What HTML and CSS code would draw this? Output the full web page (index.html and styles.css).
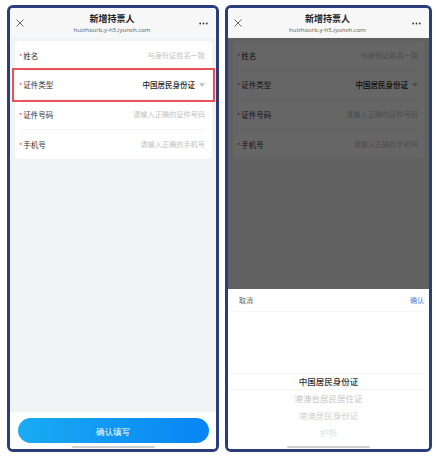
FILE: index.html
```html
<!DOCTYPE html>
<html lang="zh-CN">
<head>
    <meta charset="UTF-8">
    <meta name="viewport" content="width=device-width, initial-scale=1.0">
    <title>新增持票人</title>
    <link rel="stylesheet" href="styles.css">
</head>
<body>
    <div class="screens">
        <!-- Left: the form -->
        <div class="phone phone-left">
            <div class="topbar">
                <span class="close">
                    <svg width="8" height="8" viewBox="0 0 8 8"><path d="M0.5 0.5L7.5 7.5M7.5 0.5L0.5 7.5" stroke="#444" stroke-width="0.8" fill="none"/></svg>
                </span>
                <div class="titles">
                    <div class="title">新增持票人</div>
                    <div class="url">huizhourb.y-h5.iyunxh.com</div>
                </div>
                <span class="more">
                    <svg width="9" height="3" viewBox="0 0 9 3"><circle cx="1.2" cy="1.5" r="0.9" fill="#333"/><circle cx="4.5" cy="1.5" r="0.9" fill="#333"/><circle cx="7.8" cy="1.5" r="0.9" fill="#333"/></svg>
                </span>
            </div>

            <div class="page">
                <div class="card">
                    <div class="row">
                        <span class="label"><i>*</i>姓名</span>
                        <span class="hint">与身份证姓名一致</span>
                    </div>
                    <div class="row row-marked">
                        <span class="label"><i>*</i>证件类型</span>
                        <span class="value">中国居民身份证<span class="caret"></span></span>
                    </div>
                    <div class="row">
                        <span class="label"><i>*</i>证件号码</span>
                        <span class="hint">请输入正确的证件号码</span>
                    </div>
                    <div class="row">
                        <span class="label"><i>*</i>手机号</span>
                        <span class="hint">请输入正确的手机号</span>
                    </div>
                </div>
            </div>

            <div class="footer">
                <button type="button" class="submit">确认填写</button>
                <div class="home-bar"></div>
            </div>
        </div>

        <!-- Right: the picker sheet open -->
        <div class="phone phone-right">
            <div class="topbar">
                <span class="close">
                    <svg width="8" height="8" viewBox="0 0 8 8"><path d="M0.5 0.5L7.5 7.5M7.5 0.5L0.5 7.5" stroke="#444" stroke-width="0.8" fill="none"/></svg>
                </span>
                <div class="titles">
                    <div class="title">新增持票人</div>
                    <div class="url">huizhourb.y-h5.iyunxh.com</div>
                </div>
                <span class="more">
                    <svg width="9" height="3" viewBox="0 0 9 3"><circle cx="1.2" cy="1.5" r="0.9" fill="#333"/><circle cx="4.5" cy="1.5" r="0.9" fill="#333"/><circle cx="7.8" cy="1.5" r="0.9" fill="#333"/></svg>
                </span>
            </div>

            <div class="page">
                <div class="card">
                    <div class="row">
                        <span class="label"><i>*</i>姓名</span>
                        <span class="hint">与身份证姓名一致</span>
                    </div>
                    <div class="row">
                        <span class="label"><i>*</i>证件类型</span>
                        <span class="value">中国居民身份证<span class="caret"></span></span>
                    </div>
                    <div class="row">
                        <span class="label"><i>*</i>证件号码</span>
                        <span class="hint">请输入正确的证件号码</span>
                    </div>
                    <div class="row">
                        <span class="label"><i>*</i>手机号</span>
                        <span class="hint">请输入正确的手机号</span>
                    </div>
                </div>
                <div class="mask"></div>
            </div>

            <div class="sheet">
                <div class="sheet-bar">
                    <span class="cancel">取消</span>
                    <span class="confirm">确认</span>
                </div>
                <ul class="picker">
                    <li class="picked">中国居民身份证</li>
                    <li class="far-1">港澳台居民居住证</li>
                    <li class="far-2">港澳居民身份证</li>
                    <li class="far-3">护照</li>
                </ul>
                <div class="home-bar"></div>
            </div>
        </div>
    </div>
</body>
</html>
```

FILE: styles.css
```css
/* General */
body {
    margin: 0;
    background-color: #ffffff;
    font-family: "Noto Sans CJK SC", "Noto Sans", sans-serif;
    color: #333333;
}

.screens {
    display: flex;
    gap: 6px;
    padding: 5px 0 0 7px;
}

/* Phone frame */
.phone {
    display: flex;
    flex-direction: column;
    box-sizing: border-box;
    height: 447px;
    border: 3px solid #2b3d7b;
    border-radius: 6px;
    overflow: hidden;
    background-color: #ffffff;
}

.phone-left {
    width: 212px;
}

.phone-right {
    width: 207px;
}

/* Top bar */
.topbar {
    flex-shrink: 0;
    height: 30px;
    display: flex;
    align-items: center;
    padding: 0 8px 0 6px;
    background-color: #f7f7f8;
}

.close,
.more {
    width: 14px;
    display: flex;
}

.more {
    justify-content: flex-end;
}

.titles {
    flex: 1;
    text-align: center;
}

.title {
    font-size: 9px;
    line-height: 11px;
    font-weight: 700;
    color: #222222;
}

.url {
    margin-top: 2px;
    font-family: "Noto Sans", sans-serif;
    font-size: 6px;
    line-height: 8px;
    color: #666666;
}

/* Form area */
.page {
    position: relative;
    flex: 1;
    padding: 3px 4px 0 5px;
    background-color: #f2f3f5;
}

.card {
    background-color: #ffffff;
    border-radius: 5px;
}

.row {
    position: relative;
    box-sizing: border-box;
    height: 29.5px;
    margin: 0 7px;
    display: flex;
    align-items: center;
    justify-content: space-between;
    border-bottom: 1px solid #f1f1f1;
}

.row:last-child {
    border-bottom: none;
}

.label {
    font-size: 7.5px;
    color: #333333;
}

.label i {
    font-style: normal;
    color: #e5484d;
    font-size: 7px;
    margin-left: -3px;
    margin-right: 1px;
}

.hint {
    font-size: 7.2px;
    color: #c2c2c2;
}

.value {
    display: flex;
    align-items: center;
    font-size: 7.5px;
    font-weight: 500;
    color: #222222;
}

.caret {
    width: 0;
    height: 0;
    margin-left: 4px;
    border-left: 3.5px solid transparent;
    border-right: 3.5px solid transparent;
    border-top: 4px solid #c4c4c4;
}

/* red highlight round the picked row */
.row-marked::before {
    content: "";
    position: absolute;
    top: -3px;
    bottom: -3px;
    left: -10px;
    right: -10px;
    border: 2px solid #e8525a;
}

/* Footer */
.footer {
    flex-shrink: 0;
    box-sizing: border-box;
    height: 37px;
    padding-top: 6px;
    display: flex;
    flex-direction: column;
    align-items: center;
    background-color: #ffffff;
}

.submit {
    width: 191px;
    height: 25px;
    border: none;
    border-radius: 13px;
    background: linear-gradient(90deg, #1aabf2, #0884f4);
    color: #ffffff;
    font-family: "Noto Sans CJK SC", sans-serif;
    font-size: 8.5px;
}

.home-bar {
    width: 83px;
    height: 2px;
    margin-top: 3px;
    border-radius: 1px;
    background-color: #cfcfcf;
}

/* Right screen: mask + picker sheet */
.mask {
    position: absolute;
    top: 0;
    left: 0;
    right: 0;
    bottom: 0;
    background-color: rgba(0, 0, 0, 0.6);
}

.sheet {
    flex-shrink: 0;
    height: 160px;
    display: flex;
    flex-direction: column;
    align-items: center;
    background-color: #ffffff;
}

.sheet-bar {
    align-self: stretch;
    height: 22px;
    display: flex;
    align-items: center;
    justify-content: space-between;
    padding: 0 5px 0 11px;
    border-bottom: 1px solid #f7f7f7;
    font-size: 7px;
}

.cancel {
    color: #666666;
}

.confirm {
    color: #3d7fd8;
}

.picker {
    align-self: stretch;
    list-style: none;
    margin: 0;
    padding: 61px 0 0;
}

.picker li {
    box-sizing: border-box;
    height: 17px;
    line-height: 17px;
    text-align: center;
    font-size: 8.5px;
}

.picker .picked {
    color: #333333;
    font-weight: 500;
    border-top: 1px solid #f5f5f5;
    border-bottom: 1px solid #f5f5f5;
    line-height: 15px;
}

.picker .far-1 {
    color: #c4c4c4;
}

.picker .far-2 {
    color: #d0d0d0;
}

.picker .far-3 {
    color: #dedede;
}

.sheet .home-bar {
    margin-top: 5px;
}
```
